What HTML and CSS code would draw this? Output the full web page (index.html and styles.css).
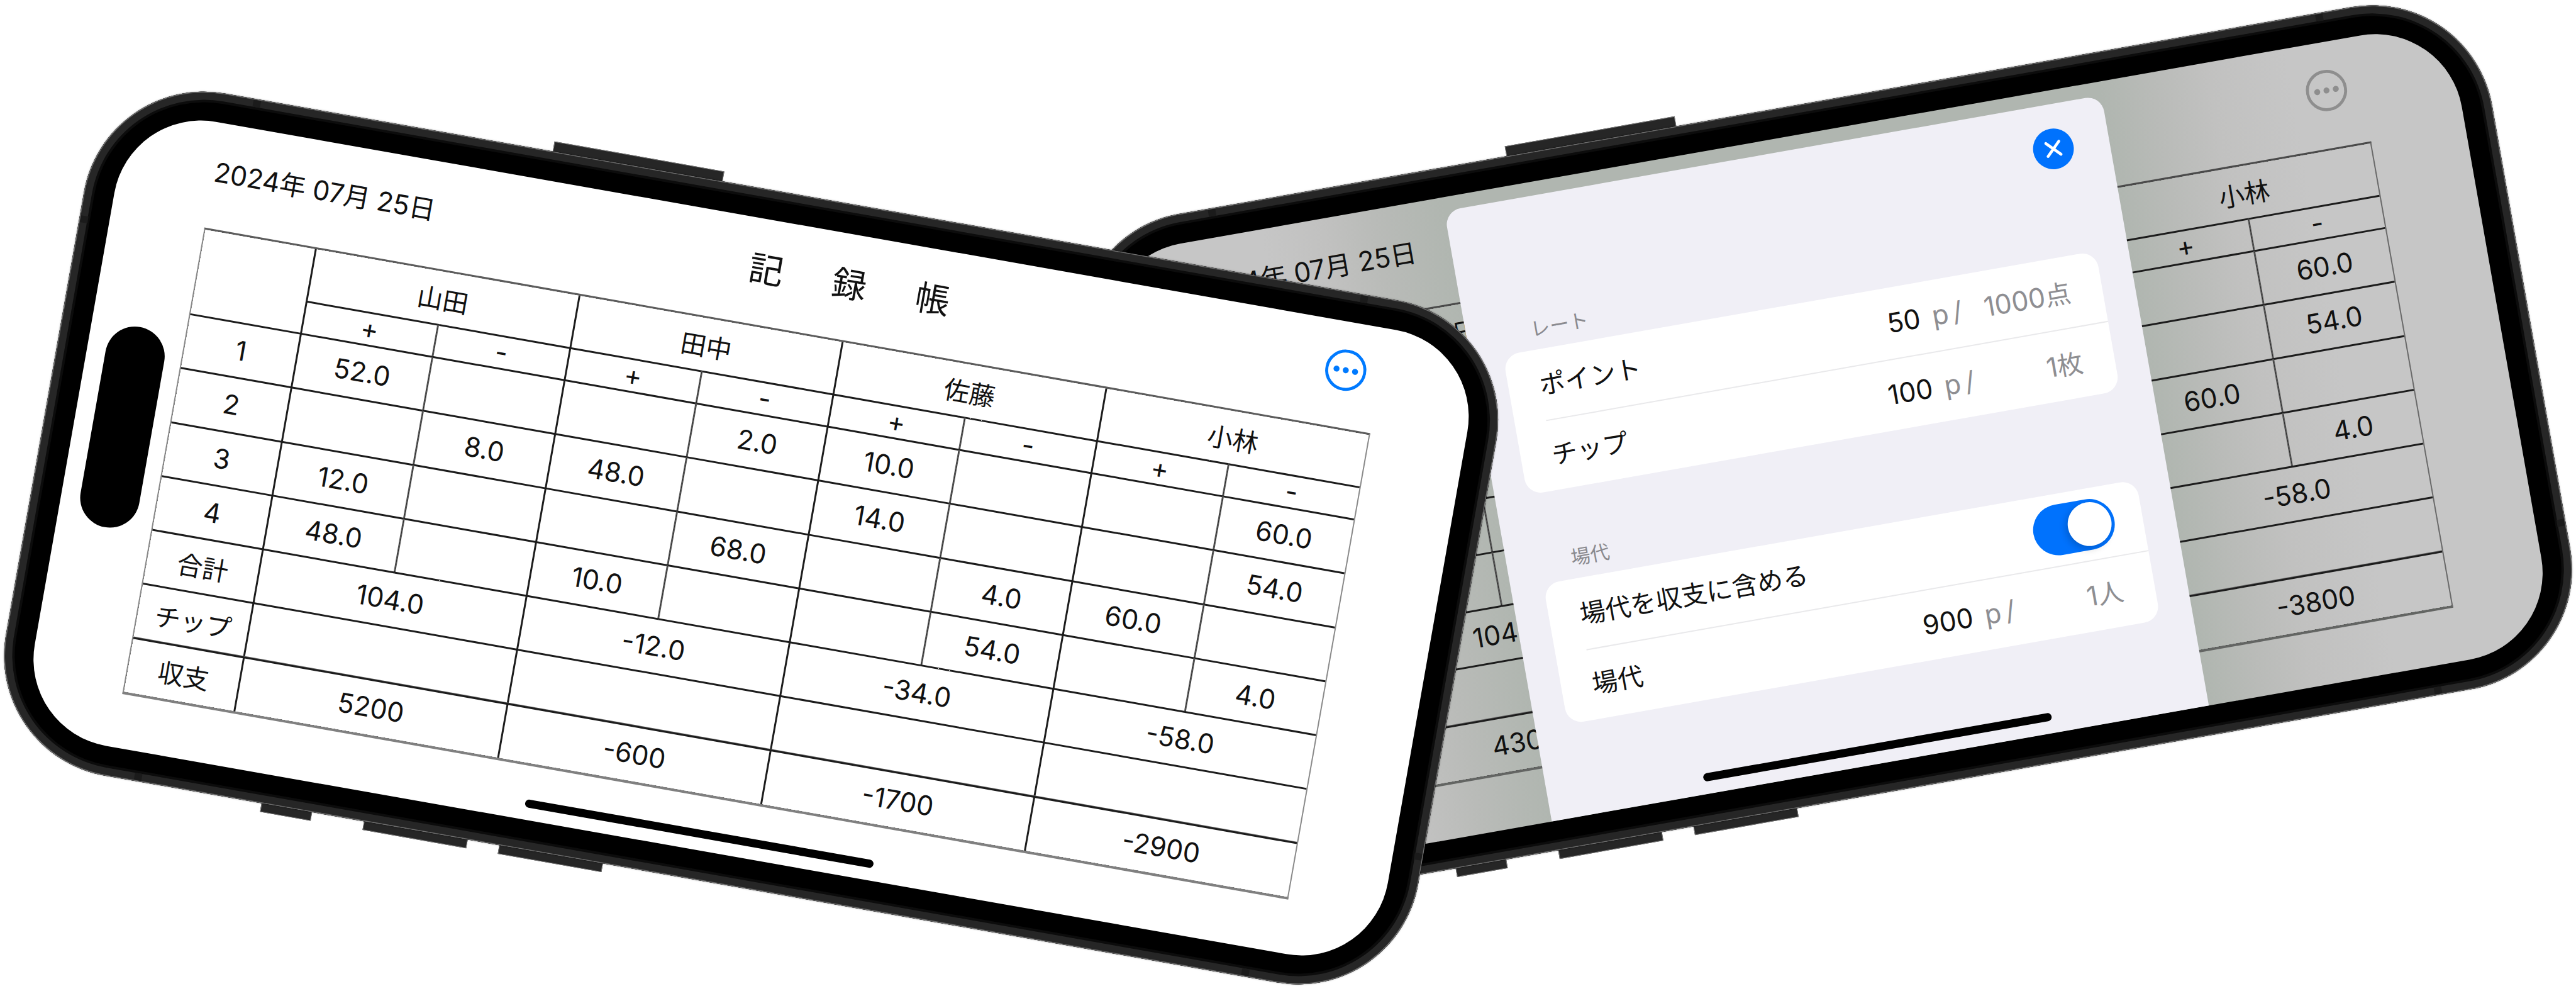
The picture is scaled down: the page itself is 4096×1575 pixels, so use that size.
FILE: index.html
```
<!DOCTYPE html>
<html lang="ja">
<head>
<meta charset="utf-8">
<title>記録帳</title>
<link rel="stylesheet" href="styles.css">
</head>
<body>
<main class="stage">

  <section class="phone phone-back">
    <i class="key power"></i><i class="key action"></i><i class="key vol-up"></i><i class="key vol-down"></i>
    <div class="frame"><i class="band b1"></i><i class="band b2"></i><i class="band b3"></i><i class="band b4"></i><i class="band v1"></i><i class="band v2"></i></div>
    <div class="screen dimmed">
      <header class="bar">
        <p class="date">2024<span class="jp">年</span> 07<span class="jp">月</span> 25<span class="jp">日</span></p>
        <span></span>
        <svg class="more" viewBox="0 0 66 66"><circle cx="33" cy="33" r="30.5"/><g><circle cx="18" cy="33" r="4.8"/><circle cx="33" cy="33" r="4.8"/><circle cx="48" cy="33" r="4.8"/></g></svg>
      </header>
      <div class="sheet-table">
        <div class="c corner"></div><div class="c name">山田</div><div class="c name"></div><div class="c name"></div><div class="c name">小林</div>
        <div class="c p">+</div><div class="c m">-</div><div class="c p"></div><div class="c m"></div><div class="c p"></div><div class="c m"></div><div class="c p">+</div><div class="c m">-</div>
        <div class="c">1</div><div class="c p">52.0</div><div class="c m"></div><div class="c p"></div><div class="c m"></div><div class="c p"></div><div class="c m"></div><div class="c p"></div><div class="c m">60.0</div>
        <div class="c">2</div><div class="c p"></div><div class="c m"></div><div class="c p"></div><div class="c m"></div><div class="c p"></div><div class="c m"></div><div class="c p"></div><div class="c m">54.0</div>
        <div class="c">3</div><div class="c p">12.0</div><div class="c m"></div><div class="c p"></div><div class="c m"></div><div class="c p"></div><div class="c m"></div><div class="c p">60.0</div><div class="c m"></div>
        <div class="c">4</div><div class="c p">48.0</div><div class="c m"></div><div class="c p"></div><div class="c m"></div><div class="c p"></div><div class="c m"></div><div class="c p"></div><div class="c m">4.0</div>
        <div class="c jp">合計</div><div class="c w">104.0</div><div class="c w"></div><div class="c w"></div><div class="c w">-58.0</div>
        <div class="c jp">チップ</div><div class="c w"></div><div class="c w"></div><div class="c w"></div><div class="c w"></div>
        <div class="c jp last">収支</div><div class="c w last">4300</div><div class="c w last"></div><div class="c w last"></div><div class="c w last">-3800</div>
      </div>

      <div class="sheet">
        <div class="sheet-head">
          <svg class="close" viewBox="0 0 66 66"><circle cx="33" cy="33" r="32.5"/><path d="M22.5 22.5L43.5 43.5M43.5 22.5L22.5 43.5"/></svg>
        </div>
        <h2 class="label">レート</h2>
        <div class="card">
          <div class="row"><span class="jp">ポイント</span><b class="val">50</b><span class="per">p/</span><span class="unit">1000<span class="jp">点</span></span></div>
          <div class="row"><span class="jp">チップ</span><b class="val">100</b><span class="per">p/</span><span class="unit">1<span class="jp">枚</span></span></div>
        </div>
        <h2 class="label second">場代</h2>
        <div class="card">
          <div class="row toggle-row"><span class="jp">場代を収支に含める</span><span class="toggle"><i></i></span></div>
          <div class="row"><span class="jp">場代</span><b class="val">900</b><span class="per">p/</span><span class="unit">1<span class="jp">人</span></span></div>
        </div>
      </div>
      <i class="home"></i>
    </div>
  </section>

  <section class="phone phone-front">
    <i class="key power"></i><i class="key action"></i><i class="key vol-up"></i><i class="key vol-down"></i>
    <div class="frame"><i class="band b1"></i><i class="band b2"></i><i class="band b3"></i><i class="band b4"></i><i class="band v1"></i><i class="band v2"></i></div>
    <div class="screen">
      <header class="bar">
        <p class="date">2024<span class="jp">年</span> 07<span class="jp">月</span> 25<span class="jp">日</span></p>
        <h1 class="title">記録帳</h1>
        <svg class="more" viewBox="0 0 66 66"><circle cx="33" cy="33" r="30.5"/><g><circle cx="18" cy="33" r="4.8"/><circle cx="33" cy="33" r="4.8"/><circle cx="48" cy="33" r="4.8"/></g></svg>
      </header>
      <div class="sheet-table">
        <div class="c corner"></div><div class="c name">山田</div><div class="c name">田中</div><div class="c name">佐藤</div><div class="c name">小林</div>
        <div class="c p">+</div><div class="c m">-</div><div class="c p">+</div><div class="c m">-</div><div class="c p">+</div><div class="c m">-</div><div class="c p">+</div><div class="c m">-</div>
        <div class="c">1</div><div class="c p">52.0</div><div class="c m"></div><div class="c p"></div><div class="c m">2.0</div><div class="c p">10.0</div><div class="c m"></div><div class="c p"></div><div class="c m">60.0</div>
        <div class="c">2</div><div class="c p"></div><div class="c m">8.0</div><div class="c p">48.0</div><div class="c m"></div><div class="c p">14.0</div><div class="c m"></div><div class="c p"></div><div class="c m">54.0</div>
        <div class="c">3</div><div class="c p">12.0</div><div class="c m"></div><div class="c p"></div><div class="c m">68.0</div><div class="c p"></div><div class="c m">4.0</div><div class="c p">60.0</div><div class="c m"></div>
        <div class="c">4</div><div class="c p">48.0</div><div class="c m"></div><div class="c p">10.0</div><div class="c m"></div><div class="c p"></div><div class="c m">54.0</div><div class="c p"></div><div class="c m">4.0</div>
        <div class="c jp">合計</div><div class="c w">104.0</div><div class="c w">-12.0</div><div class="c w">-34.0</div><div class="c w">-58.0</div>
        <div class="c jp">チップ</div><div class="c w"></div><div class="c w"></div><div class="c w"></div><div class="c w"></div>
        <div class="c jp last">収支</div><div class="c w last">5200</div><div class="c w last">-600</div><div class="c w last">-1700</div><div class="c w last">-2900</div>
      </div>
      <i class="island"></i>
      <i class="home"></i>
    </div>
  </section>

</main>
</body>
</html>
```
FILE: styles.css
```
html, body { margin: 0; padding: 0; background: #fff; }
body { width: 4096px; height: 1575px; overflow: hidden; }

.stage {
  position: relative;
  width: 4108px;
  height: 1580px;
  transform: scale(0.99708);
  transform-origin: 0 0;
  font: 400 43px/1 Inter, "Noto Sans CJK JP", sans-serif;
  color: #111;
}
.jp, .name, .title, .label { font-family: "Noto Sans CJK JP", sans-serif; }
.jp, .name { font-size: 41px; }

/* Devices */
.phone {
  position: absolute;
  left: 0;
  top: 0;
  box-sizing: border-box;
  width: 2294px;
  height: 1112px;
  padding: 50.5px 51.5px;
  transform-origin: 0 0;
}
.phone-back { transform: rotate(-10deg) translate(1593.7px, 658.3px); }
.phone-front { transform: rotate(10deg) translate(181px, 80.5px); }

.frame {
  position: absolute;
  inset: 4px 3.5px;
  border-radius: 194px;
  background: #000;
  box-shadow:
    0 0 3px rgba(0, 0, 0, 0.35),
    inset 0 0 0 1.5px #6e6e6e,
    inset 0 0 0 13px #262626,
    inset 0 0 0 17px #0c0c0c;
}
.band { position: absolute; width: 12px; height: 11px; background: #1b1b1b; }
.b1, .b2 { left: 241px; }
.b3, .b4 { right: 241px; }
.b1, .b3 { top: 2px; }
.b2, .b4 { bottom: 2px; }
.v1 { left: 2px; top: 231px; }
.v2 { right: 2px; bottom: 231px; }

.key {
  position: absolute;
  box-sizing: border-box;
  background: #262626;
  border: 1px solid #7a7a7a;
}
.power { left: 728.5px; top: -12px; width: 275px; height: 20px; }
.action, .vol-up, .vol-down { bottom: -10px; height: 18px; }
.action { left: 451.5px; width: 82px; }
.vol-up { left: 617.5px; width: 168.5px; }
.vol-down { left: 836.5px; width: 168px; }

.screen {
  position: relative;
  height: 1010.6px;
  border-radius: 140px;
  overflow: hidden;
  background: #fff;
}
.dimmed {
  background: linear-gradient(90deg,
    #c6c6c6 270px, #c1c1c0 370px, #b9bbb8 450px, #b0b6b0 565px,
    #b0b6b0 1628px, #b9bbb8 1712px, #c1c1c0 1800px, #c6c6c6 1930px);
}

.bar {
  display: grid;
  grid-template-columns: 1fr auto 1fr;
  align-items: center;
  height: 154px;
  margin-bottom: 15px;
  padding: 0 151.7px;
}
.date { margin: 0; padding-top: 2px; white-space: pre; letter-spacing: -0.2px; }
.date .jp { font-size: 42px; }
.title {
  margin: 0 0 0 249px;
  font-size: 55px;
  font-weight: 400;
  letter-spacing: 79.5px;
}
.more {
  grid-column: 3;
  justify-self: end;
  width: 66px;
  height: 66px;
  margin-right: 23px;
  fill: none;
  stroke: #007aff;
  stroke-width: 4.8;
}
.more g { fill: #007aff; stroke: none; }
.dimmed .more { stroke: #8e8e8e; }
.dimmed .more g { fill: #8e8e8e; }

/* Score table */
.sheet-table {
  display: grid;
  box-sizing: border-box;
  grid-template-columns: 179.7px repeat(8, 213.25px);
  grid-template-rows: 85px 52.5px repeat(7, 87.3px);
  width: 1888.4px;
  margin: 0 151px;
  border: solid #8a8a8a;
  border-width: 3px 2px 4px;
  border-top-color: #5c5c5c;
  border-bottom-color: #808080;
  overflow: hidden;
}
.dimmed .sheet-table { border-color: #4a4a4a #6a6a6a #636563; }
.c {
  display: flex;
  align-items: center;
  justify-content: center;
  box-shadow: 0 0 0 1.5px #1c1c1c;
}
.corner { grid-row: span 2; }
.name, .w { grid-column: span 2; }
.p { box-shadow: -1.5px 0 #1c1c1c, 0 -1.5px #1c1c1c, 0 1.5px #1c1c1c, 1.5px 0 #5a5a5a; }
.m { box-shadow: 1.5px 0 #1c1c1c, 0 -1.5px #1c1c1c, 0 1.5px #1c1c1c, -1.5px 0 #5a5a5a; }
.last { box-shadow: 0 0 0 1.5px #1c1c1c, 0 -2.4px #666; }

.island {
  position: absolute;
  left: 30.8px;
  top: 343.3px;
  width: 95.2px;
  height: 324px;
  border-radius: 48px;
  background: #000;
}
.home {
  position: absolute;
  left: 814.5px;
  bottom: 20.5px;
  width: 564px;
  height: 13px;
  border-radius: 7px;
  background: #000;
}

/* Settings sheet */
.sheet {
  position: absolute;
  left: 564.8px;
  top: 22px;
  bottom: 0;
  box-sizing: border-box;
  width: 1063.5px;
  padding: 38.7px 51.4px 0;
  border-radius: 26px 26px 0 0;
  background: #f0eff6;
}
.sheet-head { display: flex; justify-content: flex-end; height: 147.8px; }
.close { width: 66px; height: 66px; margin-right: 5px; fill: #0072fd; stroke-linecap: round; }
.close path { stroke: #fff; stroke-width: 4.6; }
.label {
  margin: 0 0 14px;
  padding-left: 51.4px;
  font-size: 31px;
  font-weight: 400;
  line-height: 43px;
  color: #8a8a8f;
}
.second { margin-top: 87px; }
.card { border-radius: 26px; background: #fff; }
.row {
  display: grid;
  grid-template-columns: 1fr auto 58px 166px;
  align-items: center;
  height: 113.25px;
  padding: 0 51.4px 0 50px;
}
.row .jp { position: relative; top: -2px; }
.unit .jp { top: 0; }
.row + .row {
  background: linear-gradient(#e9e9eb, #e9e9eb) 50px 0 / 100% 2.4px no-repeat;
}
.val { margin-right: 19px; font-weight: 400; }
.per { letter-spacing: 7px; color: #8e8e92; }
.unit { color: #8e8e92; text-align: right; }
.toggle-row { grid-template-columns: 1fr auto; padding-right: 45px; }
.toggle {
  display: flex;
  justify-content: flex-end;
  box-sizing: border-box;
  width: 131px;
  height: 81px;
  padding: 5.5px;
  border-radius: 41px;
  background: #0072fd;
}
.toggle i {
  width: 70px;
  height: 70px;
  border-radius: 50%;
  background: #fff;
  box-shadow: -4px 4px 12px rgba(0, 0, 0, 0.18);
}
```
